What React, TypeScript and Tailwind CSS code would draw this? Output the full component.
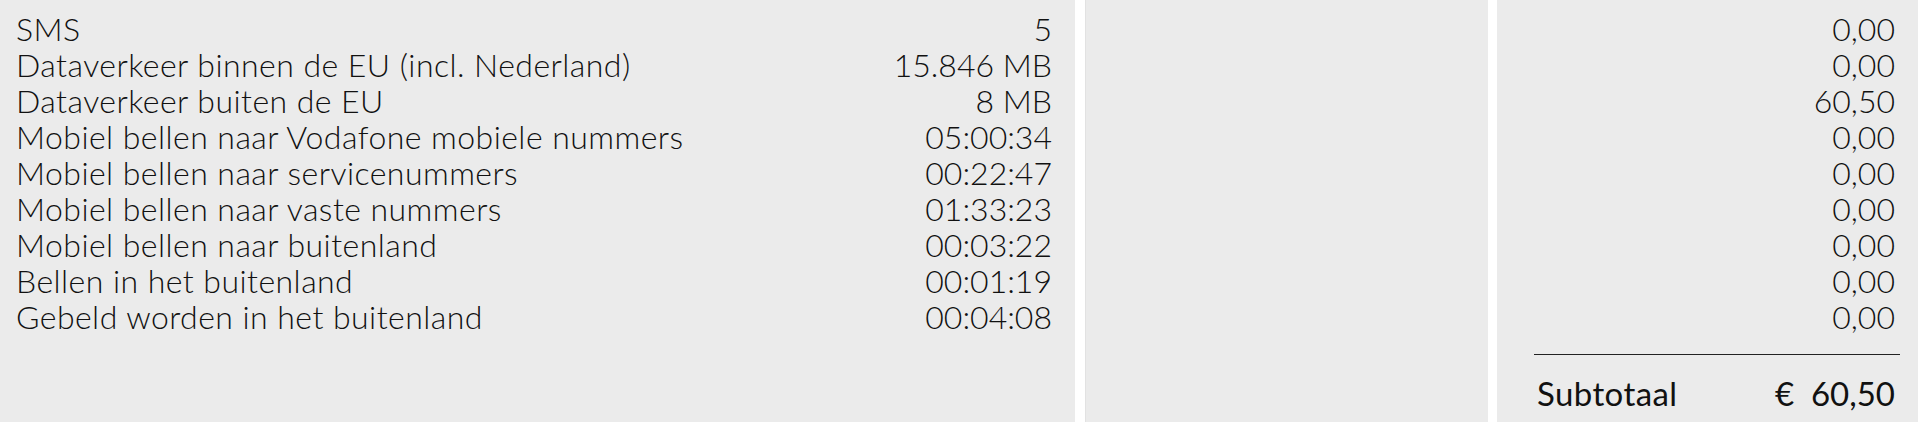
const rows = [
  { label: 'SMS', usage: '5', amount: '0,00' },
  { label: 'Dataverkeer binnen de EU (incl. Nederland)', usage: '15.846 MB', amount: '0,00' },
  { label: 'Dataverkeer buiten de EU', usage: '8 MB', amount: '60,50' },
  { label: 'Mobiel bellen naar Vodafone mobiele nummers', usage: '05:00:34', amount: '0,00' },
  { label: 'Mobiel bellen naar servicenummers', usage: '00:22:47', amount: '0,00' },
  { label: 'Mobiel bellen naar vaste nummers', usage: '01:33:23', amount: '0,00' },
  { label: 'Mobiel bellen naar buitenland', usage: '00:03:22', amount: '0,00' },
  { label: 'Bellen in het buitenland', usage: '00:01:19', amount: '0,00' },
  { label: 'Gebeld worden in het buitenland', usage: '00:04:08', amount: '0,00' },
];

export default function App() {
  return (
    <div
      className="flex h-[422px] w-[1918px] bg-white text-[#111] overflow-hidden"
      style={{ fontFamily: 'Lato, "Open Sans", sans-serif' }}
    >
      {/* Usage */}
      <div className="w-[1075px] bg-[#ebebeb] pt-[11px] pl-4 pr-[23px] font-light text-[32px] leading-[36px]">
        {rows.map((r) => (
          <div key={r.label} className="flex h-[36px] justify-between">
            <span className="tracking-[0.45px]">{r.label}</span>
            <span>{r.usage}</span>
          </div>
        ))}
      </div>

      {/* Empty column */}
      <div className="ml-[10px] w-[403px] bg-[#ebebeb] border-l border-[#e2e2e2]"></div>

      {/* Amounts */}
      <div className="ml-[9px] flex-1 bg-[#ebebeb] pt-[11px] pr-[18px] pl-[37px]">
        <div className="pr-[5px] font-light text-[32px] leading-[36px] text-right">
          {rows.map((r) => (
            <div key={r.label} className="h-[36px]">{r.amount}</div>
          ))}
        </div>
        <div className="mt-[19px] border-t border-[#222]"></div>
        <div className="mt-[20px] flex justify-between pl-[3px] pr-[5px] text-[33px] leading-[36px]">
          <span className="tracking-[0.4px]">Subtotaal</span>
          <span>€&nbsp;&nbsp;60,50</span>
        </div>
      </div>
    </div>
  );
}
